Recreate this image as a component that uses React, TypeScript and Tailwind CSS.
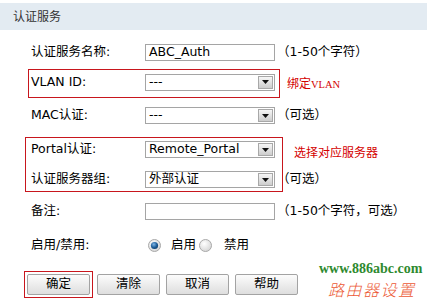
import React from "react";

const Arrow = () => (
  <span className="w-[15px] h-[13px] mr-[1px] border border-[#a8a8a8] bg-linear-to-b from-[#f6f6f6] to-[#cdcdcd] flex items-center justify-center shrink-0">
    <svg width="7" height="4" viewBox="0 0 7 4">
      <path d="M0 0h7L3.5 4z" fill="#111" />
    </svg>
  </span>
);

const Select = ({ value }: { value: string }) => (
  <div className="w-[130px] h-[17px] border border-[#a5a5a5] bg-white flex items-center shrink-0">
    <span className="flex-1 pl-[3px] leading-none whitespace-nowrap">{value}</span>
    <Arrow />
  </div>
);

const Input = ({ value = "" }: { value?: string }) => (
  <div className="w-[130px] h-[17px] border border-[#a5a5a5] bg-white flex items-center pl-[3px] leading-none shrink-0">
    {value}
  </div>
);

const Label = ({ children }: { children: React.ReactNode }) => (
  <div className="w-[114px] shrink-0 whitespace-nowrap">{children}</div>
);

const Note = ({ children }: { children: React.ReactNode }) => (
  <span className="ml-[2px] whitespace-nowrap shrink-0">{children}</span>
);

const Radio = ({ checked }: { checked?: boolean }) => (
  <svg width="13" height="13" viewBox="0 0 13 13" className="shrink-0">
    <defs>
      <radialGradient id="rg-off" cx="40%" cy="35%" r="70%">
        <stop offset="0%" stopColor="#ffffff" />
        <stop offset="100%" stopColor="#d4d4d4" />
      </radialGradient>
      <radialGradient id="rg-on" cx="40%" cy="35%" r="70%">
        <stop offset="0%" stopColor="#7fb6e6" />
        <stop offset="60%" stopColor="#1f5f9a" />
        <stop offset="100%" stopColor="#0e3d6a" />
      </radialGradient>
    </defs>
    <circle cx="6.5" cy="6.5" r="6" fill="url(#rg-off)" stroke="#a9a9a9" />
    {checked && <circle cx="6.5" cy="6.5" r="3.6" fill="url(#rg-on)" />}
  </svg>
);

const Button = ({ children }: { children: React.ReactNode }) => (
  <button className="w-[63px] h-[21px] border border-[#a3a3a3] rounded-[2px] bg-linear-to-b from-[#fcfcfc] to-[#dedede] flex items-center justify-center leading-none text-black shrink-0">
    {children}
  </button>
);

export default function App() {
  return (
    <div className="w-[427px] h-[305px] relative overflow-hidden bg-white text-[12.5px] text-black font-['DejaVu_Sans','Noto_Sans_CJK_SC',sans-serif]">
      {/* header */}
      <div className="mt-[3px] h-[27px] bg-[#e3ebf2] flex items-center pl-[13px] text-[12px] text-[#333]">
        认证服务
      </div>

      {/* name */}
      <div className="mt-[13px] h-[18px] pl-[31px] flex items-center">
        <Label>认证服务名称:</Label>
        <Input value="ABC_Auth" />
        <Note>（1-50个字符）</Note>
      </div>

      {/* VLAN */}
      <div className="mt-[8px] flex items-center">
        <div className="ml-[28px] w-[252px] h-[29px] border border-[#c8161d] pl-[2px] pb-[3px] flex items-center">
          <Label>VLAN ID:</Label>
          <Select value="---" />
        </div>
        <span className="ml-[7px] text-[12px] text-[#d40000] whitespace-nowrap">
          绑定<span className="font-['Liberation_Serif'] text-[10.5px]">VLAN</span>
        </span>
      </div>

      {/* MAC */}
      <div className="mt-[9px] h-[17px] pl-[31px] flex items-center">
        <Label>MAC认证:</Label>
        <Select value="---" />
        <Note>（可选）</Note>
      </div>

      {/* portal group */}
      <div className="mt-[13px] flex items-start">
        <div className="ml-[25px] w-[258px] h-[55px] border border-[#c8161d] pl-[5px] flex flex-col gap-[7px]">
          <div className="h-[23px] flex items-center">
            <Label>Portal认证:</Label>
            <Select value="Remote_Portal" />
          </div>
          <div className="h-[23px] flex items-center">
            <Label>认证服务器组:</Label>
            <Select value="外部认证" />
            <Note>（可选）</Note>
          </div>
        </div>
        <span className="ml-[11px] mt-[7px] text-[12px] text-[#d40000] whitespace-nowrap">
          选择对应服务器
        </span>
      </div>

      {/* remark */}
      <div className="mt-[11px] h-[17px] pl-[31px] flex items-center">
        <Label>备注:</Label>
        <Input />
        <Note>（1-50个字符，可选）</Note>
      </div>

      {/* enable */}
      <div className="mt-[16px] h-[18px] pl-[31px] flex items-center">
        <Label>启用/禁用:</Label>
        <span className="ml-[3px] flex items-center">
          <Radio checked />
        </span>
        <span className="ml-[10px]">启用</span>
        <span className="ml-[3px] flex items-center">
          <Radio />
        </span>
        <span className="ml-[12px]">禁用</span>
      </div>

      {/* buttons */}
      <div className="mt-[17px] pl-[24px] flex items-center">
        <div className="border border-[#c8161d] p-[2px] flex">
          <Button>确定</Button>
        </div>
        <div className="ml-[4px] flex gap-[6px]">
          <Button>清除</Button>
          <Button>取消</Button>
          <Button>帮助</Button>
        </div>
      </div>

      {/* watermark */}
      <div className="absolute left-[319px] top-[262px] flex flex-col items-center leading-none pointer-events-none">
        <span className="font-['Liberation_Serif',serif] font-bold text-[14px] text-[#2f8a2f]">
          www.886abc.com
        </span>
        <span className="mt-[5px] ml-[2px] italic font-light text-[16px] text-[#ec5a36] tracking-[1.5px] font-['Noto_Sans_CJK_SC',sans-serif]">
          路由器设置
        </span>
      </div>
    </div>
  );
}
